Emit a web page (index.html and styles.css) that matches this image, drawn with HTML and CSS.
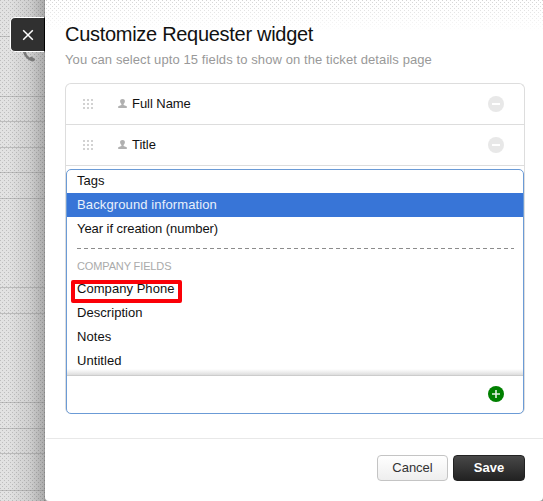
FILE: index.html
```html
<!DOCTYPE html>
<html lang="en">
<head>
<meta charset="utf-8">
<title>Customize Requester widget</title>
<link rel="stylesheet" href="styles.css">
</head>
<body>
<div class="page">
  <aside class="backdrop">
    <svg class="rules" width="45" height="501" stroke="#777" stroke-opacity=".35"><path d="M0 36.5H45M0 96.5H45M0 121.5H45M0 147.5H45M0 172.5H45M0 198.5H45M0 287.5H45M0 313.5H45M0 402.5H45M0 428.5H45M0 453.5H45M0 490.5H45"/></svg>
    <svg class="phone" width="15" height="15" viewBox="0 0 15 15"><path d="M1.5 3L5 4L5.8 6.5Q7 8.5 8.5 9.5L10.5 8.5L14.2 11.2Q13.5 14 10.5 13.3Q4 11 1.5 3Z" fill="#7a7a7a"/></svg>
    <button class="close" aria-label="Close"><svg width="12" height="12" viewBox="0 0 12 12"><path d="M1.2 1.2L10.8 10.8M10.8 1.2L1.2 10.8" stroke="#fff" stroke-width="1.5"/></svg></button>
  </aside>
  <main class="dialog">
    <header class="header">
      <h1>Customize Requester widget</h1>
      <p>You can select upto 15 fields to show on the ticket details page</p>
    </header>
    <section class="fields">
      <div class="field">
        <i class="grip"></i>
        <svg class="person" width="9" height="9" viewBox="0 0 9 9"><path d="M4.5 0C6.4 0 7 1 6.9 2.4Q6.7 4.3 5.6 5V6L8.8 7.2V9H.2V7.2L3.4 6V5Q2.3 4.3 2.1 2.4C2 1 2.6 0 4.5 0Z"/></svg>
        <span class="label">Full Name</span><i class="remove"></i>
      </div>
      <div class="field">
        <i class="grip"></i>
        <svg class="person" width="9" height="9" viewBox="0 0 9 9"><path d="M4.5 0C6.4 0 7 1 6.9 2.4Q6.7 4.3 5.6 5V6L8.8 7.2V9H.2V7.2L3.4 6V5Q2.3 4.3 2.1 2.4C2 1 2.6 0 4.5 0Z"/></svg>
        <span class="label">Title</span><i class="remove"></i>
      </div>
      <div class="picker">
        <div class="options">
          <div class="option first">Tags</div>
          <div class="option selected">Background information</div>
          <div class="option narrow">Year if creation (number)</div>
          <svg class="divider" width="437" height="1"><path d="M0 .5H437" stroke="#8c8c8c" stroke-dasharray="4 3"/></svg>
          <div class="group">COMPANY FIELDS</div>
          <div class="option marked">Company Phone</div>
          <div class="option">Description</div>
          <div class="option">Notes</div>
          <div class="option">Untitled</div>
        </div>
        <div class="add-row"><svg width="16" height="16" viewBox="0 0 16 16"><circle cx="8" cy="8" r="8" fill="#008000"/><path d="M4 8H12M8 4V12" stroke="#e4f2e4" stroke-width="1.6"/></svg></div>
      </div>
    </section>
    <footer class="footer"><button class="btn cancel">Cancel</button><button class="btn save">Save</button></footer>
  </main>
</div>
</body>
</html>
```
FILE: styles.css
```css
*, *::after { box-sizing: border-box; }
body { margin: 0; font: 13px/24px "Liberation Sans", Arial, sans-serif; color: #111; overflow: hidden; }
h1, p { margin: 0; font-weight: 400; white-space: nowrap; }
button { font: inherit; margin: 0; padding: 0; }
.page { display: flex; width: 543px; height: 501px; background: #999; }
.backdrop {
  position: relative; width: 45px; height: 501px;
  background:
    linear-gradient(90deg, transparent 8px, rgba(0,0,0,.09) 30px, rgba(0,0,0,.24) 44px, rgba(0,0,0,.38) 45px),
    conic-gradient(from 0deg at 1px 1px, transparent 75%, rgba(0,0,0,.16) 0) 0 0 / 4px 4px,
    conic-gradient(from 0deg at 1px 1px, transparent 75%, rgba(0,0,0,.16) 0) 2px 2px / 4px 4px,
    #e2e2e2;
}
.rules { display: block; }
.phone { position: absolute; left: 21px; top: 48px; }
.close {
  position: absolute; left: 10px; top: 17px; width: 35px; height: 35px;
  display: flex; align-items: center; justify-content: center;
  background: #303030; border: 1px solid #fff; border-right: 1px solid #000; border-radius: 5px 0 0 5px;
}
.dialog { width: 498px; height: 501px; border-left: 1px solid #fff; border-radius: 0 0 4px 4px; background: #fff; }
.header {
  height: 83px; padding: 22px 0 0 19px;
  background:
    linear-gradient(rgba(255,255,255,.15), #fff 31px),
    conic-gradient(from 0deg at 1px 1px, transparent 75%, #ccc 0) 0 0 / 4px 4px,
    conic-gradient(from 0deg at 1px 1px, transparent 75%, #ccc 0) 2px 2px / 4px 4px;
}
.header h1 { font-size: 20px; line-height: 25px; letter-spacing: -.29px; }
.header p { line-height: 26px; color: #999; letter-spacing: .095px; }
.fields { width: 460px; height: 331px; margin-left: 19px; border: 1px solid #ddd; border-bottom: 0; border-radius: 6px; }
.field { display: flex; align-items: center; height: 41px; padding: 0 20px 0 17px; border-bottom: 1px solid #ddd; }
.grip {
  width: 10px; height: 10px; margin-right: 25px;
  background: conic-gradient(from 0deg at 2px 2px, transparent 75%, #d2d2d2 0) 0 0 / 4px 4px;
}
.person { fill: #b0b0b0; margin-right: 5px; position: relative; top: -1px; }
.label { letter-spacing: -.05px; }
.remove { width: 16px; height: 16px; margin-left: auto; border-radius: 50%; background: linear-gradient(#fff, #fff) center / 8px 2px no-repeat #e8e8e8; }
.picker { width: 458px; height: 245px; margin-top: 3px; border: 1px solid #6b9bd6; border-radius: 5px; overflow: hidden; }
.options { height: 206px; border-bottom: 1px solid #ccc; background: linear-gradient(transparent 199px, #ddd 205px); }
.option { height: 24px; padding-left: 10px; letter-spacing: .05px; }
.option.first { height: 23px; line-height: 22px; }
.option.narrow { letter-spacing: -.06px; }
.option.selected { background: #3875d7; color: #e8f0fb; letter-spacing: .12px; }
.divider { display: block; margin: 7px 0 5px 10px; }
.group { height: 23px; padding-left: 10px; font-size: 11px; letter-spacing: -.13px; color: #aaa; line-height: 24px; }
.marked { position: relative; }
.marked::after { content: ""; position: absolute; left: 4px; top: 3px; width: 111px; height: 23px; border: 4px solid #fb0007; border-radius: 2px; }
.add-row { display: flex; justify-content: flex-end; padding: 10px 19px 0 0; }
.footer { display: flex; justify-content: flex-end; height: 63px; margin-top: 24px; padding: 16px 18px 0 0; gap: 5px; border-top: 1px solid #e8e8e8; }
.btn { height: 26px; border: 1px solid #c4c4c4; border-radius: 4px; }
.cancel { width: 71px; color: #333; background: linear-gradient(#fff, #eee); }
.save { width: 72px; color: #fff; font-weight: 700; border-color: #222; background: linear-gradient(#484848, #222); }
```
